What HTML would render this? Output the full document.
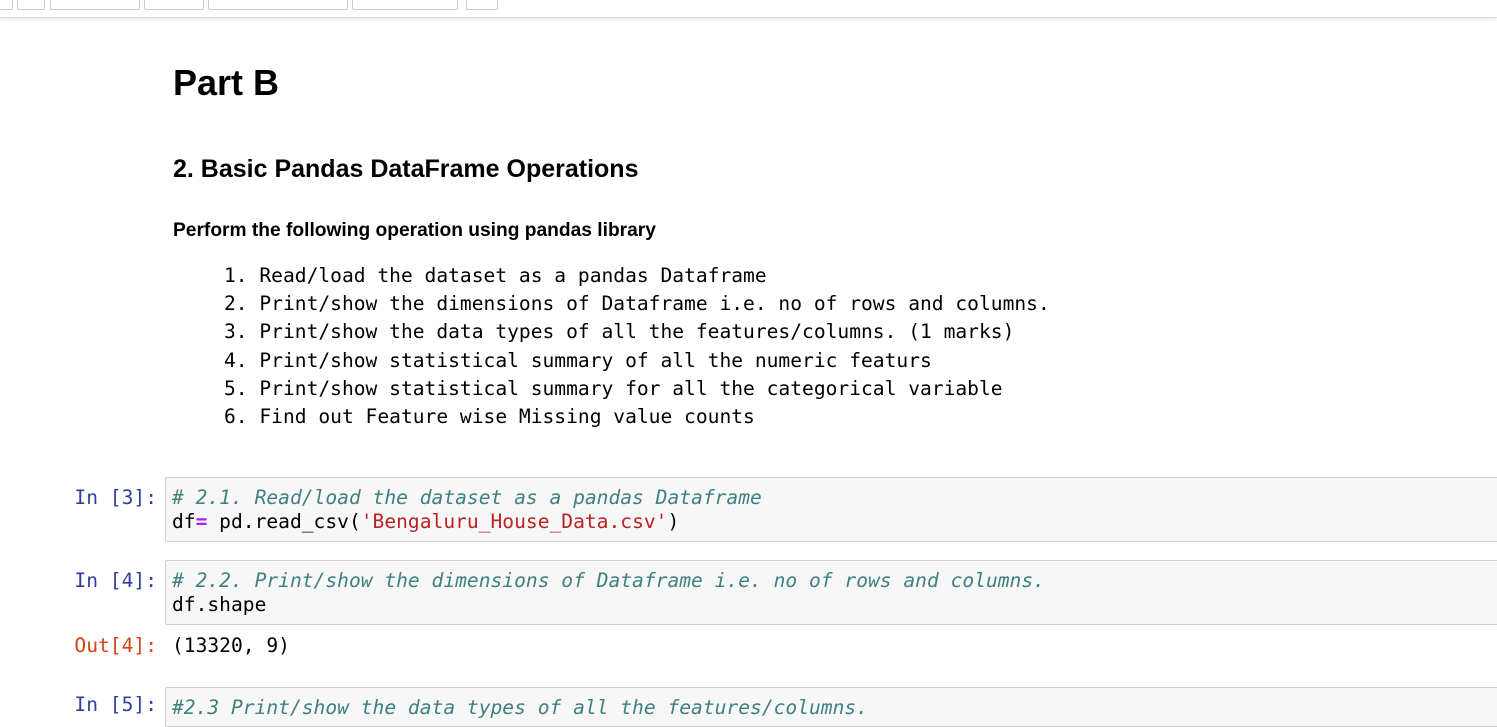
<html><head><style>
body{margin:0;width:1497px;height:699px;overflow:hidden;background:#fff;font-family:"Liberation Sans",sans-serif;position:relative}
.tb{position:absolute;top:-4px;height:12px;border:1px solid #ccc;border-radius:2px;background:#fff}
.bar{position:absolute;top:0;left:0;width:1497px;height:17px;border-bottom:1px solid #ddd;box-shadow:0 2px 3px rgba(0,0,0,.08)}
.m{font-family:"DejaVu Sans Mono","Liberation Mono",monospace;font-size:19.6px;white-space:pre}
.cell{position:absolute;left:165px;width:1340px;background:#f7f7f7;border:1px solid #cfcfcf;border-radius:2px;box-sizing:border-box;padding:8px 6px;line-height:24px}
.p{position:absolute;right:1340px;color:#303F9F;line-height:24px}
.c{color:#408080;font-style:italic}
.s{color:#BA2121}.o{color:#AA22FF;font-weight:bold}
</style></head><body>
<div class="bar"></div>
<div class="tb" style="left:-2px;width:13px"></div>
<div class="tb" style="left:17px;width:26px"></div>
<div class="tb" style="left:50px;width:88px"></div>
<div class="tb" style="left:144px;width:58px"></div>
<div class="tb" style="left:208px;width:138px"></div>
<div class="tb" style="left:352px;width:104px"></div>
<div class="tb" style="left:466px;width:30px"></div>
<div style="position:absolute;left:173px;top:62px;font-size:36px;font-weight:bold">Part B</div>
<div style="position:absolute;left:173px;top:155px;font-size:25px;font-weight:bold">2. Basic Pandas DataFrame Operations</div>
<div style="position:absolute;left:173px;top:220px;font-size:19.2px;font-weight:bold">Perform the following operation using pandas library</div>
<div class="m" style="position:absolute;left:224px;top:262px;line-height:28.2px">1. Read/load the dataset as a pandas Dataframe
2. Print/show the dimensions of Dataframe i.e. no of rows and columns.
3. Print/show the data types of all the features/columns. (1 marks)
4. Print/show statistical summary of all the numeric featurs
5. Print/show statistical summary for all the categorical variable
6. Find out Feature wise Missing value counts</div>
<div class="m p" style="top:486px">In [3]:</div>
<div class="m cell" style="top:477px;height:65px"><span class="c"># 2.1. Read/load the dataset as a pandas Dataframe</span>
df<span class="o">=</span> pd.read_csv(<span class="s">'Bengaluru_House_Data.csv'</span>)</div>
<div class="m p" style="top:569px">In [4]:</div>
<div class="m cell" style="top:560px;height:65px"><span class="c"># 2.2. Print/show the dimensions of Dataframe i.e. no of rows and columns.</span>
df.shape</div>
<div class="m p" style="top:634px;color:#D84315">Out[4]:</div>
<div class="m" style="position:absolute;left:172px;top:634px;line-height:24px">(13320, 9)</div>
<div class="m p" style="top:693px">In [5]:</div>
<div class="m cell" style="top:687px;height:40px"><span class="c">#2.3 Print/show the data types of all the features/columns.</span></div>
</body></html>
